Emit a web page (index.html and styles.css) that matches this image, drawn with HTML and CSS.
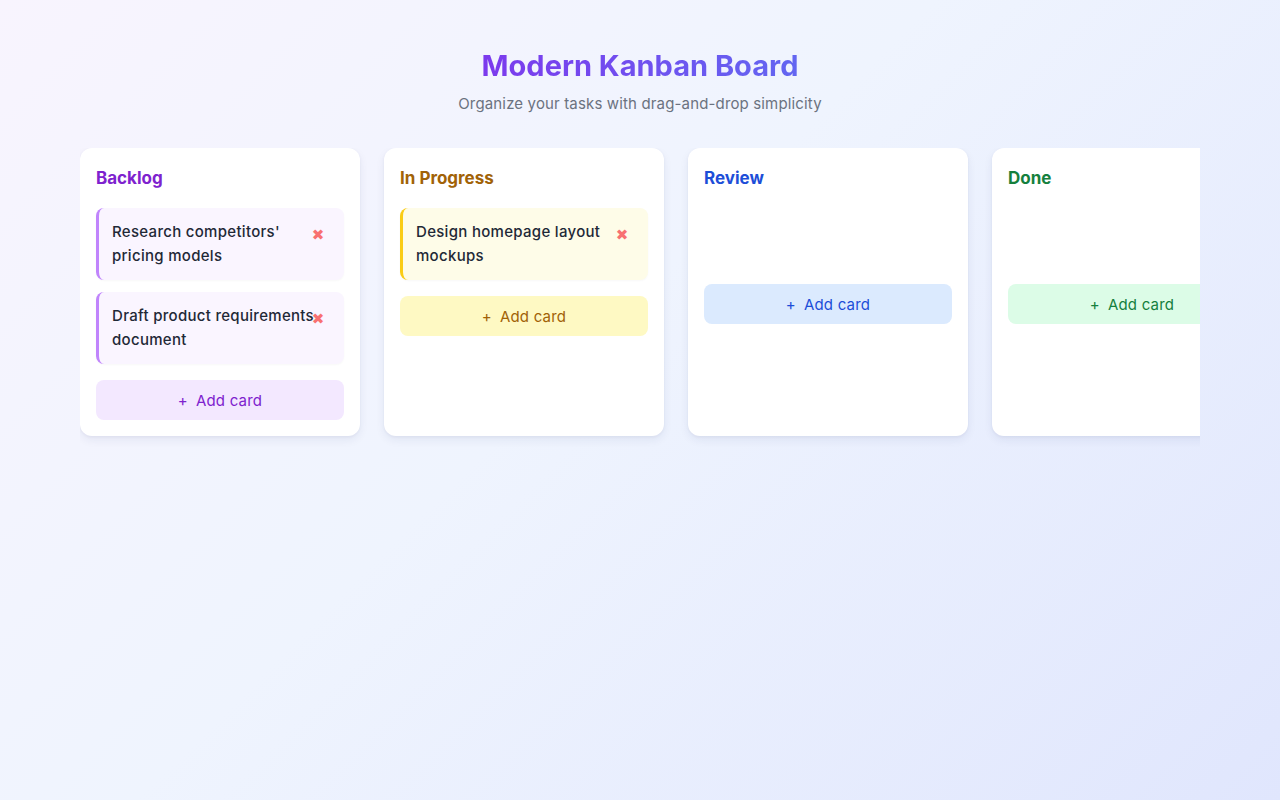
FILE: index.html
```html
<!DOCTYPE html>
<html lang="en">
<head>
<meta charset="utf-8">
<title>Modern Kanban Board</title>
<link rel="stylesheet" href="styles.css">
</head>
<body>
<main class="page">
  <header class="page-header">
    <h1 class="page-title">Modern Kanban Board</h1>
    <p class="page-subtitle">Organize your tasks with drag-and-drop simplicity</p>
  </header>

  <section class="board">
    <div class="column column--purple">
      <h2 class="column-title">Backlog</h2>
      <div class="card-list">
        <div class="card">
          <p class="card-text">Research competitors' pricing models</p>
          <button class="card-delete" aria-label="Delete">&#x2716;</button>
        </div>
        <div class="card">
          <p class="card-text">Draft product requirements document</p>
          <button class="card-delete" aria-label="Delete">&#x2716;</button>
        </div>
      </div>
      <button class="add-card"><span class="add-plus">+</span>Add card</button>
    </div>

    <div class="column column--yellow">
      <h2 class="column-title">In Progress</h2>
      <div class="card-list">
        <div class="card">
          <p class="card-text">Design homepage layout mockups</p>
          <button class="card-delete" aria-label="Delete">&#x2716;</button>
        </div>
      </div>
      <button class="add-card"><span class="add-plus">+</span>Add card</button>
    </div>

    <div class="column column--blue">
      <h2 class="column-title">Review</h2>
      <div class="card-list"></div>
      <button class="add-card"><span class="add-plus">+</span>Add card</button>
    </div>

    <div class="column column--green">
      <h2 class="column-title">Done</h2>
      <div class="card-list"></div>
      <button class="add-card"><span class="add-plus">+</span>Add card</button>
    </div>
  </section>
</main>
</body>
</html>
```

FILE: styles.css
```css
* {
  box-sizing: border-box;
}

html, body {
  margin: 0;
  min-height: 100%;
}

body {
  min-height: 100vh;
  font-family: Inter, "Noto Sans", "Liberation Sans", sans-serif;
  color: #1f2937;
  background: linear-gradient(135deg, #f8f4fe 0%, #eff4fe 45%, #e0e6fd 100%);
}

.page {
  padding: 48px 80px;
}

.page-header {
  text-align: center;
}

.page-title {
  margin: 0;
  font-size: 29px;
  line-height: 36px;
  font-weight: 700;
  display: inline-block;
  background: linear-gradient(90deg, #7c3aed, #6366f1);
  -webkit-background-clip: text;
  background-clip: text;
  color: transparent;
}

.page-subtitle {
  margin: 9px 0 0;
  font-size: 15px;
  line-height: 22px;
  letter-spacing: 0.15px;
  color: #6b7280;
}

/* Horizontal board of fixed-width columns */
.board {
  margin-top: 33px;
  display: flex;
  gap: 24px;
  align-items: stretch;
  overflow-x: auto;
  padding-bottom: 20px;
  scrollbar-width: none;
}

.board::-webkit-scrollbar {
  display: none;
}

.column {
  flex: 0 0 280px;
  background: #ffffff;
  border-radius: 12px;
  padding: 16px;
  box-shadow: 0 4px 10px rgba(30, 41, 99, 0.07), 0 1px 3px rgba(30, 41, 99, 0.05);
  display: flex;
  flex-direction: column;
}

.column-title {
  margin: 0 0 16px;
  font-size: 17px;
  line-height: 28px;
  font-weight: 700;
  color: var(--accent-text);
}

.card-list {
  display: flex;
  flex-direction: column;
  gap: 12px;
  min-height: 60px;
}

.card {
  position: relative;
  background: var(--card-bg);
  border-left: 3px solid var(--card-border);
  border-radius: 8px;
  padding: 12px 16px 12px 13px;
  box-shadow: 0 1px 2px rgba(0, 0, 0, 0.03);
}

.card-text {
  margin: 0;
  font-size: 15px;
  line-height: 24px;
  font-weight: 500;
  letter-spacing: 0.3px;
  color: #1f2937;
}

.card-delete {
  position: absolute;
  top: 15px;
  right: 18px;
  width: 16px;
  height: 24px;
  padding: 0;
  border: 0;
  background: none;
  color: #f87171;
  font-size: 15px;
  line-height: 24px;
  text-align: center;
  font-family: "DejaVu Sans", sans-serif;
  cursor: pointer;
}

.add-card {
  margin-top: 16px;
  height: 40px;
  width: 100%;
  border: 0;
  border-radius: 8px;
  background: var(--add-bg);
  color: var(--accent-text);
  font-family: Inter, "Noto Sans", "Liberation Sans", sans-serif;
  font-size: 15px;
  font-weight: 400;
  letter-spacing: 0.2px;
  cursor: pointer;
}

.add-plus {
  margin-right: 8px;
}

.column--purple {
  --accent-text: #7e22ce;
  --card-bg: #faf5ff;
  --card-border: #c084fc;
  --add-bg: #f3e8ff;
}

.column--yellow {
  --accent-text: #a16207;
  --card-bg: #fefce8;
  --card-border: #facc15;
  --add-bg: #fef9c3;
}

.column--blue {
  --accent-text: #1d4ed8;
  --card-bg: #eff6ff;
  --card-border: #60a5fa;
  --add-bg: #dbeafe;
}

.column--green {
  --accent-text: #15803d;
  --card-bg: #f0fdf4;
  --card-border: #4ade80;
  --add-bg: #dcfce7;
}
```
